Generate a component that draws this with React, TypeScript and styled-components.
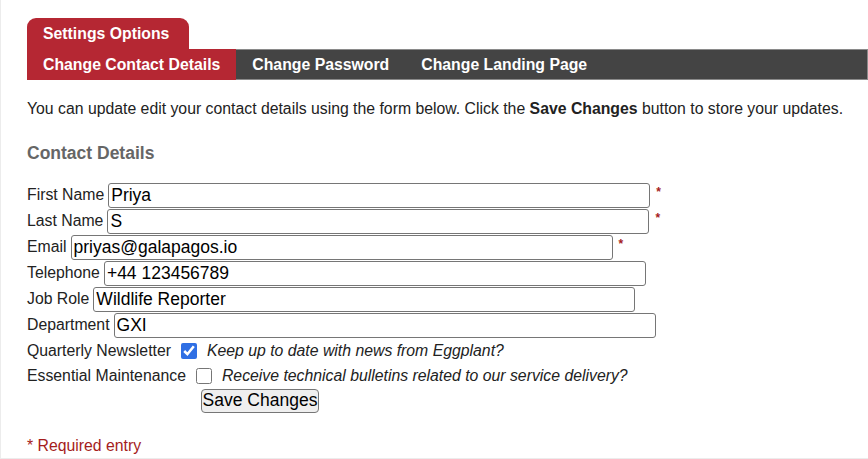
import React from "react";
import styled, { createGlobalStyle } from "styled-components";

const Global = createGlobalStyle`
  html, body { margin: 0; padding: 0; background: #fff; }
  body { font-family: "Liberation Sans", Arial, Helvetica, sans-serif; color: #222; }
`;

const Page = styled.div`
  box-sizing: border-box;
  width: 868px;
  height: 459px;
  padding: 18px 0 0 26px;
  border-left: 1px solid #ececec;
  border-bottom: 1px solid #ececec;
  overflow: hidden;
`;

const SectionTab = styled.div`
  display: inline-flex;
  align-items: center;
  box-sizing: border-box;
  height: 31px;
  padding: 0 20px 0 16px;
  background: #b52733;
  color: #fff;
  font-weight: bold;
  font-size: 15.8px;
  border-radius: 9px 9px 0 0;
`;

const NavBar = styled.nav`
  display: flex;
  box-sizing: border-box;
  height: 31px;
  background: #444;
  border: 1px solid #8a8a8a;
  border-left: none;
`;

const NavItem = styled.div<{ $active?: boolean }>`
  display: flex;
  align-items: center;
  padding: 0 16px;
  margin: -1px 0;
  background: ${(p) => (p.$active ? "#b52733" : "transparent")};
  color: #fff;
  font-weight: bold;
  font-size: 15.8px;
`;

const Intro = styled.p`
  margin: 20px 0 0;
  font-size: 15.8px;
  line-height: 18px;
`;

const Heading = styled.h3`
  margin: 25px 0 0;
  font-size: 17.5px;
  line-height: 20px;
  color: #666;
  font-weight: bold;
`;

const Form = styled.form`
  margin-top: 19px;
  display: flex;
  flex-direction: column;
`;

const Row = styled.div<{ $h?: number }>`
  display: flex;
  align-items: center;
  height: ${(p) => p.$h ?? 26}px;
`;

const Label = styled.label`
  font-size: 15.8px;
  margin-right: 4px;
  white-space: nowrap;
`;

const TextInput = styled.input`
  box-sizing: border-box;
  width: 542px;
  height: 25px;
  border: 1px solid #767676;
  border-radius: 3px;
  padding: 0 2px;
  font-family: "Liberation Sans", Arial, sans-serif;
  font-size: 17.5px;
  color: #000;
  background: #fff;
  outline: none;
`;

const Required = styled.span`
  align-self: flex-start;
  margin: 3px 0 0 6px;
  color: #a51c1c;
  font-size: 12px;
  font-weight: bold;
`;

const Check = styled.input`
  width: 16px;
  height: 16px;
  margin: 0 10px 0 6px;
  accent-color: #2f6fe4;
`;

const Hint = styled.span`
  font-style: italic;
  font-size: 15.8px;
`;

const SaveButton = styled.button`
  margin-left: 174px;
  box-sizing: border-box;
  width: 118px;
  height: 24px;
  padding: 0;
  background: #efefef;
  border: 1px solid #767676;
  border-radius: 4px;
  font-family: "Liberation Sans", Arial, sans-serif;
  font-size: 17.5px;
  color: #000;
`;

const Footnote = styled.p`
  margin: 24px 0 0;
  color: #a51c1c;
  font-size: 15.8px;
  line-height: 18px;
`;

const fields = [
  { label: "First Name", value: "Priya", req: true },
  { label: "Last Name", value: "S", req: true },
  { label: "Email", value: "priyas@galapagos.io", req: true },
  { label: "Telephone", value: "+44 123456789" },
  { label: "Job Role", value: "Wildlife Reporter" },
  { label: "Department", value: "GXI" },
];

export default function App() {
  return (
    <>
      <Global />
      <Page>
        <SectionTab>Settings Options</SectionTab>
        <NavBar>
          <NavItem $active>Change Contact Details</NavItem>
          <NavItem>Change Password</NavItem>
          <NavItem>Change Landing Page</NavItem>
        </NavBar>
        <Intro>
          You can update edit your contact details using the form below. Click the <b>Save Changes</b> button to store
          your updates.
        </Intro>
        <Heading>Contact Details</Heading>
        <Form onSubmit={(e) => e.preventDefault()}>
          {fields.map((f) => (
            <Row key={f.label}>
              <Label>{f.label}</Label>
              <TextInput defaultValue={f.value} />
              {f.req && <Required>*</Required>}
            </Row>
          ))}
          <Row $h={25}>
            <Label>Quarterly Newsletter</Label>
            <Check type="checkbox" defaultChecked />
            <Hint>Keep up to date with news from Eggplant?</Hint>
          </Row>
          <Row $h={25}>
            <Label>Essential Maintenance</Label>
            <Check type="checkbox" />
            <Hint>Receive technical bulletins related to our service delivery?</Hint>
          </Row>
          <Row $h={25}>
            <SaveButton type="submit">Save Changes</SaveButton>
          </Row>
        </Form>
        <Footnote>* Required entry</Footnote>
      </Page>
    </>
  );
}
